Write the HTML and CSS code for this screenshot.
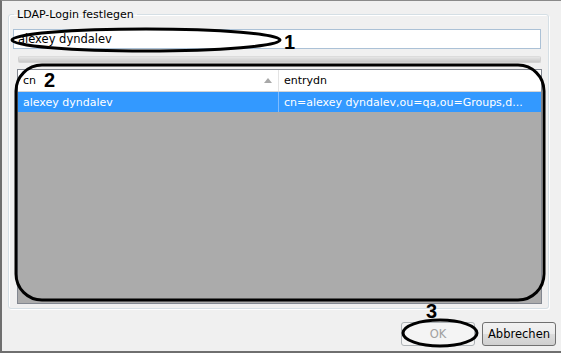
FILE: index.html
```html
<!DOCTYPE html>
<html lang="de">
<head>
  <meta charset="UTF-8" />
  <title>LDAP-Login festlegen</title>
  <link rel="stylesheet" href="styles.css">
</head>
<body>
  <div class="window">
    <fieldset class="group">
      <legend>LDAP-Login festlegen</legend>
      <input type="text" class="search" value="alexey dyndalev" />
      <div class="splitter"></div>
      <div class="grid">
        <div class="grid-head">
          <div class="col col-cn">cn <span class="sort"></span></div>
          <div class="col col-dn">entrydn</div>
        </div>
        <div class="grid-row selected">
          <div class="col col-cn">alexey dyndalev</div>
          <div class="col col-dn">cn=alexey dyndalev,ou=qa,ou=Groups,d...</div>
        </div>
        <div class="grid-empty"></div>
      </div>
    </fieldset>
    <div class="buttons">
      <button type="button" class="btn" disabled>OK</button>
      <button type="button" class="btn">Abbrechen</button>
    </div>

    <!-- annotations drawn over the screenshot -->
    <svg class="marks" width="561" height="353" viewBox="0 0 561 353">
      <ellipse cx="146" cy="40" rx="134" ry="11" />
      <rect x="16" y="65" width="528" height="235" rx="26" ry="26" />
      <ellipse cx="440" cy="333" rx="37" ry="13" />
      <text x="284" y="49">1</text>
      <text x="44" y="87">2</text>
      <text x="426" y="318">3</text>
    </svg>
  </div>
</body>
</html>
```

FILE: styles.css
```css
html, body { margin: 0; padding: 0; }
body { width: 561px; height: 353px; overflow: hidden; background: #f0f0f0; font-family: "DejaVu Sans", Verdana, sans-serif; font-size: 11px; color: #000; }

.window { position: relative; box-sizing: border-box; width: 561px; height: 353px; border-left: 2px solid #6f6f6f; border-top: 1px solid #8a8a8a; border-bottom: 2px solid #6f6f6f; padding: 7px 12px 0 6px; }

.group { margin: 0; padding: 8px 7px 0 4px; border: 1px solid #d5dfe5; border-radius: 3px; box-shadow: inset 1px 1px 0 #fff, 1px 1px 0 #fff; height: 301px; box-sizing: border-box; overflow: hidden; }
.group legend { padding: 0 3px; margin-left: 1px; font-size: 11px; color: #000; }

.search { display: block; box-sizing: border-box; width: 100%; height: 20px; margin: 0; padding: 0 4px; border: 1px solid #abc1d6; font: inherit; font-size: 11.5px; background: #fff; outline: none; }

.splitter { height: 5px; margin: 7px 0 6px 5px; border-radius: 2px; background: linear-gradient(#e6e6e6, #c8c8c8); border: 1px solid #d2d2d2; border-top-color: #dcdcdc; }

.grid { margin-left: 4px; margin-right: -1px; border: 1px solid #828790; height: 235px; box-sizing: border-box; display: flex; flex-direction: column; background: #ababab; }
.grid-head { display: flex; height: 21px; background: #fff; border-bottom: 1px solid #d5d5d5; }
.grid-row { display: flex; height: 20px; }
.grid-row.selected { background: #3399ff; color: #fff; }
.grid-empty { flex: 1; }

.col { display: flex; align-items: center; padding: 0 5px; box-sizing: border-box; white-space: nowrap; overflow: hidden; }
.col-cn { width: 261px; position: relative; }
.col-dn { flex: 1; }
.grid-head .col-cn { border-right: 1px solid #e3e3e3; }
.grid-row .col-cn { border-right: 1px solid #7fbcff; }

.sort { position: absolute; right: 6px; top: 8px; width: 0; height: 0; border-left: 4px solid transparent; border-right: 4px solid transparent; border-bottom: 5px solid #a8a8a8; }

.buttons { display: flex; justify-content: flex-end; gap: 7px; margin-top: 13px; margin-right: -7px; }
.btn { width: 74px; height: 24px; padding: 0; font: inherit; font-size: 11.5px; border: 1px solid #707070; border-radius: 3px; background: linear-gradient(#f2f2f2 0%, #ebebeb 50%, #dddddd 51%, #cfcfcf 100%); color: #000; }
.btn[disabled] { border-color: #adb2b5; background: #f4f4f4; color: #a0a0a0; }

.marks { position: absolute; left: -2px; top: -1px; pointer-events: none; }
.marks ellipse, .marks rect { fill: none; stroke: #000; stroke-width: 3; }
.marks text { font-family: "Liberation Sans", Arial, sans-serif; font-weight: bold; font-size: 20px; fill: #000; }
```
